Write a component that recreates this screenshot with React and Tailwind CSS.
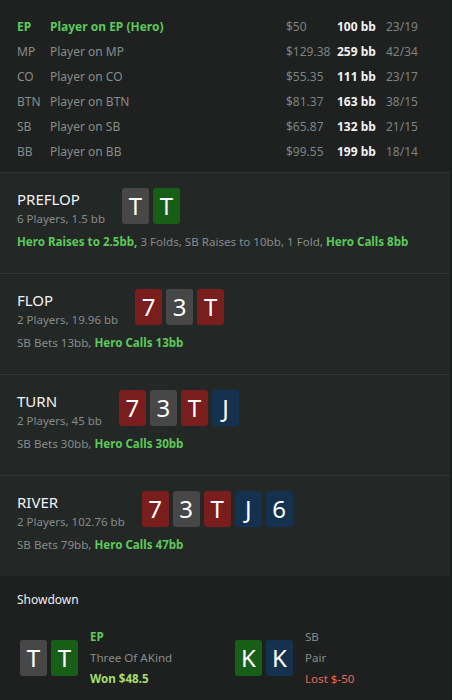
const players = [
  { pos: "EP", name: "Player on EP (Hero)", money: "$50", bb: "100 bb", stats: "23/19", hero: true },
  { pos: "MP", name: "Player on MP", money: "$129.38", bb: "259 bb", stats: "42/34" },
  { pos: "CO", name: "Player on CO", money: "$55.35", bb: "111 bb", stats: "23/17" },
  { pos: "BTN", name: "Player on BTN", money: "$81.37", bb: "163 bb", stats: "38/15" },
  { pos: "SB", name: "Player on SB", money: "$65.87", bb: "132 bb", stats: "21/15" },
  { pos: "BB", name: "Player on BB", money: "$99.55", bb: "199 bb", stats: "18/14" },
];

const suitBg = {
  s: "bg-[#474747]",
  h: "bg-[#7a1d1d]",
  c: "bg-[#175e17]",
  d: "bg-[#14324f]",
};

const streets = [
  {
    title: "PREFLOP",
    sub: "6 Players, 1.5 bb",
    cards: ["Ts", "Tc"],
    actions: [
      { t: "Hero Raises to 2.5bb,", hero: true },
      { t: " 3 Folds, SB Raises to 10bb, 1 Fold, " },
      { t: "Hero Calls 8bb", hero: true },
    ],
  },
  {
    title: "FLOP",
    sub: "2 Players, 19.96 bb",
    cards: ["7h", "3s", "Th"],
    actions: [{ t: "SB Bets 13bb, " }, { t: "Hero Calls 13bb", hero: true }],
  },
  {
    title: "TURN",
    sub: "2 Players, 45 bb",
    cards: ["7h", "3s", "Th", "Jd"],
    actions: [{ t: "SB Bets 30bb, " }, { t: "Hero Calls 30bb", hero: true }],
  },
  {
    title: "RIVER",
    sub: "2 Players, 102.76 bb",
    cards: ["7h", "3s", "Th", "Jd", "6d"],
    actions: [{ t: "SB Bets 79bb, " }, { t: "Hero Calls 47bb", hero: true }],
  },
];

function Card({ card }) {
  return (
    <div
      className={`w-[27px] h-[36px] rounded-[3px] flex items-center justify-center text-white text-[24px] leading-none ${suitBg[card[1]]}`}
    >
      {card[0]}
    </div>
  );
}

function Street({ street }) {
  return (
    <div className="border-t border-[#323635] bg-[#232726] pt-[15px] pb-[22px] px-[17px]">
      <div className="flex items-start gap-[17px]">
        <div>
          <div className="text-[15px] leading-[22px] text-[#f2f2f2]">{street.title}</div>
          <div className="text-[11.5px] leading-[18px] text-[#868c89]">{street.sub}</div>
        </div>
        <div className="flex gap-[4px]">
          {street.cards.map((c, i) => (
            <Card key={i} card={c} />
          ))}
        </div>
      </div>
      <div className="mt-[5px] text-[11.6px] leading-[18px] text-[#868c89]">
        {street.actions.map((a, i) => (
          <span key={i} className={a.hero ? "font-bold text-[#5cc95a]" : ""}>
            {a.t}
          </span>
        ))}
      </div>
    </div>
  );
}

function ShowdownPlayer({ cards, pos, hand, result, won }) {
  return (
    <div className="w-[221px] flex items-center gap-[12px]">
      <div className="flex gap-[4px]">
        {cards.map((c, i) => (
          <Card key={i} card={c} />
        ))}
      </div>
      <div className="text-[11.6px] leading-[21px]">
        <div className={won ? "font-bold text-[#5cc95a]" : "text-[#868c89]"}>{pos}</div>
        <div className="text-[#868c89]">{hand}</div>
        <div className={won ? "font-bold text-[#a4df6c]" : "text-[#e8665a]"}>{result}</div>
      </div>
    </div>
  );
}

export default function App() {
  return (
    <div className="w-[452px] h-[700px] bg-[#1a1d1c] overflow-hidden" style={{ fontFamily: '"Noto Sans", "Open Sans", sans-serif' }}>
      <div className="w-[450px]">

        {/* PLAYERS */}
        <div className="bg-[#1e2120] pt-[14px] pb-[8px] pl-[17px]">
          {players.map((p) => (
            <div
              key={p.pos}
              className="grid grid-cols-[33px_236px_51px_49px_auto] h-[25px] items-center text-[12px]"
            >
              <span className={p.hero ? "font-bold text-[#5cc95a]" : "text-[#868c89]"}>{p.pos}</span>
              <span className={p.hero ? "font-bold text-[#5cc95a]" : "text-[#868c89]"}>{p.name}</span>
              <span className="text-[#7c8380]">{p.money}</span>
              <span className="font-bold text-[#f2f2f2]">{p.bb}</span>
              <span className="text-[#7c8380]">{p.stats}</span>
            </div>
          ))}
        </div>

        {/* STREETS */}
        {streets.map((s) => (
          <Street key={s.title} street={s} />
        ))}

        {/* SHOWDOWN */}
        <div className="bg-[#1d201f] pt-[15px] pb-[20px]">
          <div className="px-[17px] text-[12px] leading-[18px] text-[#eeeeee]">Showdown</div>
          <div className="mt-[17px] pl-[20px] flex">
            <ShowdownPlayer cards={["Ts", "Tc"]} pos="EP" hand="Three Of AKind" result="Won $48.5" won />
            <ShowdownPlayer cards={["Kc", "Kd"]} pos="SB" hand="Pair" result="Lost $-50" />
          </div>
        </div>
      </div>
    </div>
  );
}
